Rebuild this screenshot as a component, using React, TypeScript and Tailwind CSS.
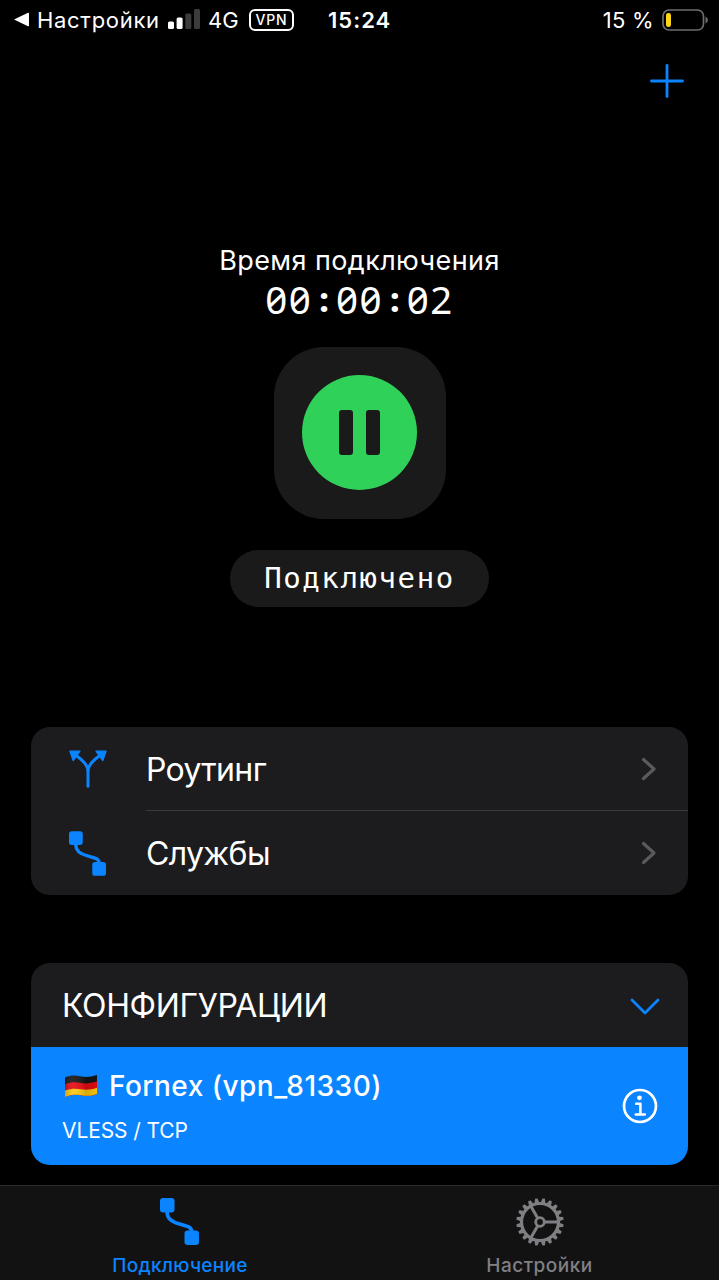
import type { ReactNode } from 'react'

const gearTeeth = Array.from({ length: 20 }, (_, i) => i * 18 + 9)

function LinkIcon({ className }: { className?: string }) {
  return (
    <svg viewBox="0 0 39 47" className={className} fill="currentColor">
      <rect x="0" y="0" width="14.5" height="14.5" rx="3" />
      <rect x="24.5" y="32.5" width="14.5" height="14.5" rx="3" />
      <path
        d="M7.2 13v2c0 6 5 9 12.300 11S31.800 28.500 31.800 34"
        fill="none"
        stroke="currentColor"
        strokeWidth="3.600"
      />
    </svg>
  )
}

function BranchIcon() {
  return (
    <svg viewBox="0 0 38 38" className="w-[38px] h-[38px]" fill="currentColor" stroke="currentColor" strokeLinejoin="round">
      <path strokeWidth="1.200" d="M0.900 1.200H11L4.300 10.700Z" />
      <path strokeWidth="1.200" d="M37.100 1.200H27L33.700 10.700Z" />
      <path
        d="M7 5.500C13 9.500 19 14.500 19 21.500V36.200M31 5.500C25 9.500 19 14.500 19 21.500"
        fill="none"
        strokeWidth="3"
        strokeLinecap="round"
      />
    </svg>
  )
}

function GearIcon() {
  return (
    <svg viewBox="-24 -24 48 48" className="w-[48px] h-[48px]" fill="none" stroke="currentColor">
      <circle r="18.500" strokeWidth="3.200" />
      {gearTeeth.map((a) => (
        <path key={a} d="M19.500 -2.300L23.700 -1.300V1.300L19.500 2.300Z" fill="currentColor" stroke="none" transform={`rotate(${a})`} />
      ))}
      <circle r="4.300" strokeWidth="2.800" />
      {[0, 120, 240].map((a) => (
        <path key={a} d="M5 0H18" strokeWidth="3" transform={`rotate(${a})`} />
      ))}
    </svg>
  )
}

function GermanFlag() {
  return (
    <svg viewBox="0 0 34 24" className="w-[34px] h-[24px]">
      <defs>
        <clipPath id="wave">
          <path d="M1 3.500C8 0.500 12 1.500 17 2.500S27 3 33 1V20C27 22.500 22 22 17 21.200S7 20.500 1 23Z" />
        </clipPath>
        <linearGradient id="shade">
          <stop offset="0" stopColor="#000" stopOpacity="0.25" />
          <stop offset="0.300" stopColor="#fff" stopOpacity="0.080" />
          <stop offset="0.650" stopColor="#000" stopOpacity="0.150" />
          <stop offset="1" stopColor="#000" stopOpacity="0.050" />
        </linearGradient>
      </defs>
      <g clipPath="url(#wave)">
        <path d="M0 0H34V24H0Z" fill="#161616" />
        <path d="M0 10.500C7 7.500 12 8 17 9S27 9.500 34 7V24H0Z" fill="#e80b12" />
        <path d="M0 17C7 14 12 14.500 17 15.300S27 16 34 13.500V24H0Z" fill="#fdc90f" />
        <path d="M0 0H34V24H0Z" fill="url(#shade)" />
      </g>
    </svg>
  )
}

function Chevron() {
  return (
    <svg viewBox="0 0 16 24" className="w-[16px] h-[24px] mr-[31px]" fill="none" stroke="#5a5a5e" strokeWidth="3.200">
      <path d="M2.500 2.500L13 12L2.500 21.500" strokeLinecap="round" strokeLinejoin="round" />
    </svg>
  )
}

function Timer() {
  const parts = ['00', '00', '02']
  return (
    <div className="flex h-[44px] font-['Noto_Sans',sans-serif] text-[38.5px] leading-[42px] [font-feature-settings:'zero']">
      {parts.map((part, i) => (
        <div key={i} className="flex">
          {i > 0 && <span className="w-[23.6px] text-center text-[34px] font-extrabold">:</span>}
          <span className="w-[47.2px] text-center tracking-[1.6px]">{part}</span>
        </div>
      ))}
    </div>
  )
}

function Row({ icon, label, divider }: { icon: ReactNode; label: string; divider?: boolean }) {
  return (
    <div className="flex h-[84px] items-stretch">
      <div className="flex w-[115px] items-center pl-[38px] text-[#0a84ff]">{icon}</div>
      <div className={`flex flex-1 items-center justify-between ${divider ? 'border-b border-[#3a3a3c]' : ''}`}>
        <span className="pt-[2px] text-[32px] tracking-[-0.65px]">{label}</span>
        <Chevron />
      </div>
    </div>
  )
}

function StatusBar() {
  return (
    <div className="flex h-[40px] items-center pl-[14px] pr-[11px] text-[22px] leading-[40px] whitespace-nowrap">
      <svg viewBox="0 0 16 16" className="w-[16px] h-[16px]" fill="#fff">
        <path d="M0 7.500L14 0.800Q15 0.500 15 1.500V13.500Q15 14.500 14 14.200Z" />
      </svg>
      <span className="ml-[7px] w-[131px] tracking-[0.7px]">Настройки</span>
      <svg viewBox="0 0 32 20" className="mb-[2px] w-[32px] h-[20px]" fill="#fff">
        <rect x="0" y="12.500" width="6" height="7.500" rx="1.500" />
        <rect x="8.600" y="8.500" width="6" height="11.500" rx="1.500" />
        <g fill="#3c3c3e">
          <rect x="17.300" y="4.500" width="6" height="15.500" rx="1.500" />
          <rect x="26" y="0" width="6" height="20" rx="1.500" />
        </g>
      </svg>
      <span className="ml-[8px] w-[41px]">4G</span>
      <span className="flex h-[22px] w-[45px] items-center justify-center rounded-[6px] border-2 border-white text-[14px] font-medium leading-none tracking-[0.8px]">
        VPN
      </span>
      <span className="ml-[34px] w-[66px] font-semibold tracking-[1px]">15:24</span>
      <span className="ml-auto tracking-[0.3px]">15 %</span>
      <svg viewBox="0 0 46 22" className="mb-[1px] ml-[8px] w-[46px] h-[22px]">
        <rect x="1" y="1" width="40.500" height="20" rx="6" fill="none" stroke="#6e6e70" strokeWidth="1.700" />
        <path d="M43.500 7.500Q46 9 46 11T43.500 14.500Z" fill="#6e6e70" />
        <rect x="4" y="4" width="5" height="14" rx="2.300" fill="#fcd816" />
      </svg>
    </div>
  )
}

export default function App() {
  return (
    <div className="flex h-[1280px] w-[719px] flex-col overflow-hidden bg-black font-['Inter',sans-serif] text-white">
      <StatusBar />

      <div className="flex h-[82px] justify-end pt-[24px] pr-[35px]">
        <svg viewBox="0 0 34 34" className="w-[34px] h-[34px]" stroke="#0a84ff" strokeWidth="2.800" strokeLinecap="round">
          <path d="M17 1.500V32.500M1.500 17H32.500" />
        </svg>
      </div>

      {/* Connection state */}
      <div className="flex h-[605px] flex-col items-center pt-[121px]">
        <div className="h-[35px] text-[27px] leading-[35px] tracking-[0.4px]">Время подключения</div>
        <Timer />
        <div className="mt-[25px] flex h-[172px] w-[172px] items-center justify-center rounded-[50px] bg-[#1a1a1a]">
          <div className="mb-[1px] flex h-[115px] w-[115px] items-center justify-center gap-[13px] rounded-full bg-[#30d158]">
            <div className="h-[45px] w-[14px] rounded-[3px] bg-[#1a1a1a]" />
            <div className="h-[45px] w-[14px] rounded-[3px] bg-[#1a1a1a]" />
          </div>
        </div>
        <div className="mt-[31px] flex h-[57px] w-[259px] items-center justify-center rounded-full bg-[#1a1a1a] font-['DejaVu_Sans_Mono',monospace] text-[29px] tracking-[1.6px]">
          Подключено
        </div>
      </div>

      <div className="mx-[31px] h-[168px] shrink-0 rounded-[19px] bg-[#1c1c1e]">
        <Row icon={<BranchIcon />} label="Роутинг" divider />
        <Row icon={<LinkIcon className="w-[37px] h-[45px]" />} label="Службы" />
      </div>

      {/* Server list */}
      <div className="mx-[31px] mt-[68px] h-[202px] shrink-0 overflow-hidden rounded-[19px] bg-[#1c1c1e]">
        <div className="flex h-[84px] items-center justify-between pl-[31px] pr-[28px]">
          <span className="pt-[1px] text-[32px] tracking-[-0.35px]">КОНФИГУРАЦИИ</span>
          <svg viewBox="0 0 30 18" className="mt-[4px] w-[30px] h-[18px]" fill="none" stroke="#0a84ff" strokeWidth="2.800">
            <path d="M2 2L15 15L28 2" strokeLinecap="round" strokeLinejoin="round" />
          </svg>
        </div>
        <div className="flex h-[118px] items-center justify-between bg-[#0a84ff] pl-[31px] pr-[30px]">
          <div className="flex flex-col">
            <div className="flex h-[44px] items-center gap-[11px] pl-[2px]">
              <GermanFlag />
              <span className="text-[28px] font-medium tracking-[0.48px]">Fornex (vpn_81330)</span>
            </div>
            <span className="h-[40px] text-[21px] leading-[46px] tracking-[-0.1px]">VLESS / TCP</span>
          </div>
          <svg viewBox="0 0 36 36" className="w-[36px] h-[36px]" fill="none" stroke="#fff">
            <circle cx="18" cy="18" r="16" strokeWidth="2.700" />
            <circle cx="17.500" cy="9.800" r="2.400" fill="#fff" stroke="none" />
            <path d="M14.200 15.800H18.400V26.200M13.700 26.500H22.800" strokeWidth="2.500" strokeLinecap="round" strokeLinejoin="round" />
          </svg>
        </div>
      </div>

      {/* Tab bar */}
      <div className="mt-[20px] flex h-[95px] shrink-0 border-t border-[#2a2a2c] bg-[#121212] text-[19px] font-medium">
        <div className="flex w-[360px] flex-col items-center pt-[12px] text-[#0a84ff]">
          <LinkIcon className="mr-[1px] w-[39px] h-[47px]" />
          <span className="mt-[9px] leading-[24px] tracking-[0.3px]">Подключение</span>
        </div>
        <div className="flex flex-1 flex-col items-center pt-[12px] text-[#808084]">
          <GearIcon />
          <span className="mt-[8px] leading-[24px] tracking-[0.5px]">Настройки</span>
        </div>
      </div>
    </div>
  )
}
